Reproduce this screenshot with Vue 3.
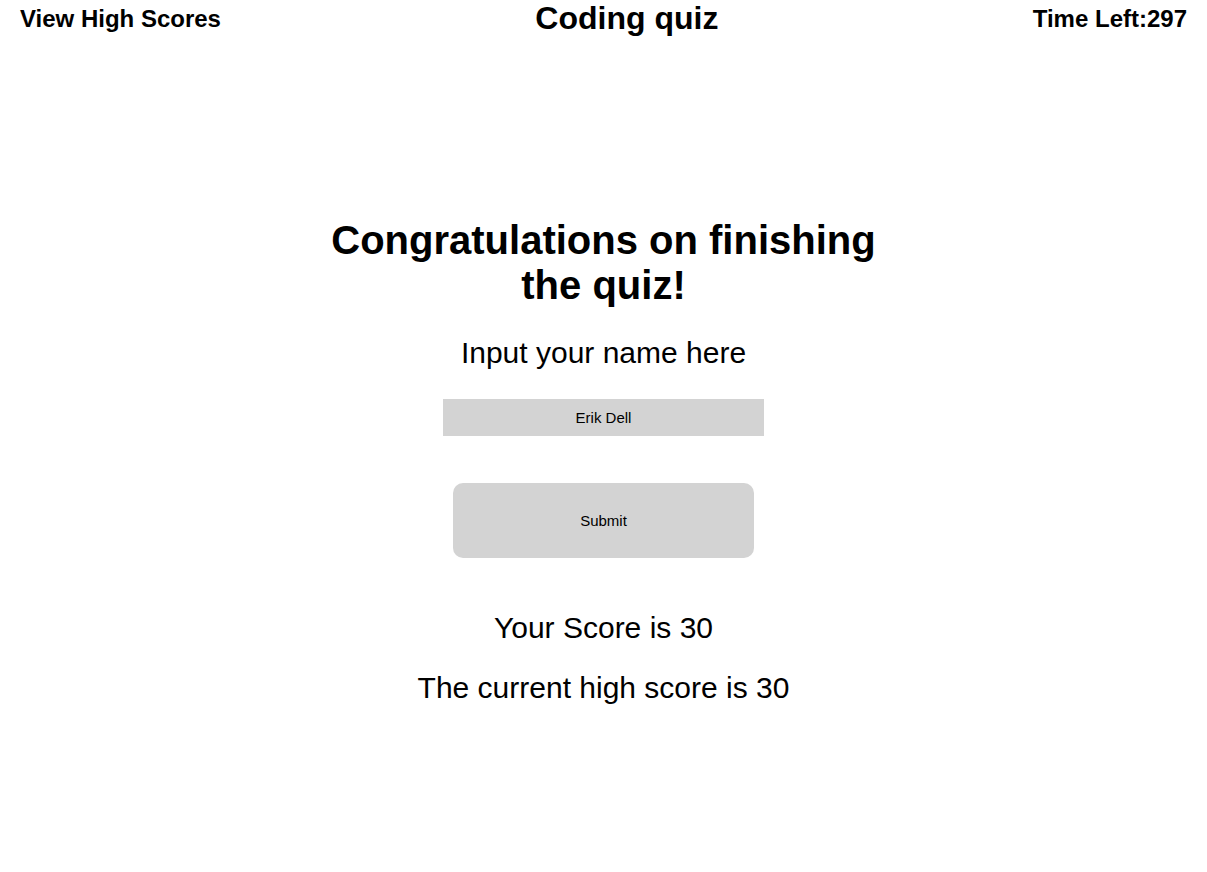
<script setup>
import { ref } from 'vue'

const name = ref('Erik Dell')
const timeLeft = ref(297)
const score = ref(30)
const highScore = ref(30)
</script>

<template>
  <div class="page">
    <header class="bar">
      <a class="scores" href="#scores">View High Scores</a>
      <h1 class="title">Coding quiz</h1>
      <p class="timer">Time Left:{{ timeLeft }}</p>
    </header>
    <main class="content">
      <h2 class="heading">Congratulations on finishing the quiz!</h2>
      <form class="form" @submit.prevent>
        <label class="line" for="player">Input your name here</label>
        <input id="player" v-model="name" class="field" type="text" />
        <button class="submit" type="submit">Submit</button>
      </form>
      <p class="line">Your Score is {{ score }}</p>
      <p class="line last">The current high score is {{ highScore }}</p>
    </main>
  </div>
</template>

<style>
body {
  margin: 0;
  background: #fff;
}
</style>

<style scoped>
.page {
  min-height: 100vh;
  color: #000;
  font-family: "Liberation Sans", Arial, sans-serif;
}
.bar {
  display: flex;
  justify-content: space-between;
  align-items: flex-end;
  padding: 0 20px;
  font-size: 24px;
  line-height: 34px;
  font-weight: bold;
}
.scores {
  color: inherit;
  text-decoration: none;
}
.title {
  margin: 0;
  font-size: 32px;
  line-height: 36px;
}
.timer {
  margin: 0;
}
.content {
  display: flex;
  flex-direction: column;
  align-items: center;
  width: 50%;
  margin: 182px auto 0;
  text-align: center;
}
.heading {
  margin: 0 0 28px;
  font-size: 40px;
  line-height: 45px;
}
.form {
  display: flex;
  flex-direction: column;
  align-items: center;
  width: 100%;
}
.line {
  margin: 0;
  font-size: 30px;
  line-height: 34px;
}
.last {
  margin-top: 26px;
}
.field,
.submit {
  box-sizing: border-box;
  border: 0;
  background: #d3d3d3;
  color: #000;
  font-family: inherit;
  font-size: 15px;
  text-align: center;
}
.field {
  width: calc(50% + 20px);
  height: 37px;
  margin: 29px 0 47px;
  padding: 10px;
}
.submit {
  width: 50%;
  height: 75px;
  margin-bottom: 53px;
  border-radius: 10px;
}
</style>
